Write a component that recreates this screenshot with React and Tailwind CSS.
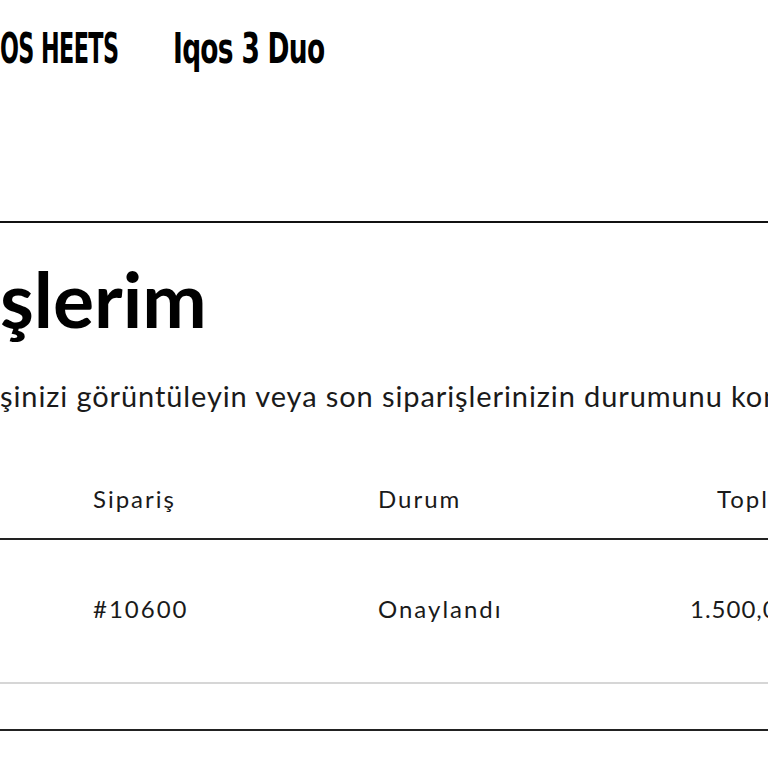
const navFont = { fontFamily: '"Liberation Sans Narrow", "DejaVu Sans Condensed", "Liberation Sans", sans-serif' }

const App = () => {
    return (
        <div className="w-[768px] h-[768px] overflow-hidden bg-white text-black font-['Lato',sans-serif]">
            <nav className="flex items-center h-[96px] whitespace-nowrap">
                <span className="w-[173px] shrink-0">
                    <span className="inline-block text-[42px] font-bold tracking-[-1px] origin-left scale-x-[0.59]" style={navFont}>OS HEETS</span>
                </span>
                <span className="inline-block text-[42px] font-bold tracking-[-1px] origin-left scale-x-[0.70]" style={navFont}>Iqos 3 Duo</span>
            </nav>
            <div className="h-[125px]"></div>
            <section className="border-t-2 border-[#111] w-[1100px]">
                <h1 className="text-[77px] font-bold leading-none mt-[37px]">şlerim</h1>
                <p className="text-[29px] leading-[42px] tracking-[0.9px] text-[#1a1a1a] mt-[38px] whitespace-nowrap">şinizi görüntüleyin veya son siparişlerinizin durumunu kontrol edin.</p>
                <div className="mt-[55px] text-[24px] tracking-[2px] text-[#1a1a1a]">
                    <div className="flex items-center h-[68px] pb-[12px] border-b-2 border-[#222]">
                        <span className="w-[378px] pl-[93px]">Sipariş</span>
                        <span className="w-[339px]">Durum</span>
                        <span>Toplam</span>
                    </div>
                    <div className="flex items-center h-[144px] pb-[4px] border-b-2 border-[#d6d6d6]">
                        <span className="w-[378px] pl-[93px]">#10600</span>
                        <span className="w-[312px]">Onaylandı</span>
                        <span className="tracking-[1px]">1.500,00 TL</span>
                    </div>
                    <div className="h-[47px] border-b-2 border-[#222]"></div>
                </div>
            </section>
        </div>
    )
}

export default App
